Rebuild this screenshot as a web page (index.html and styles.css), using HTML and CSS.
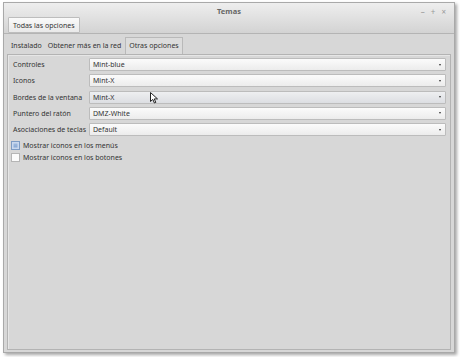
FILE: index.html
```html
<!DOCTYPE html>
<html lang="es">
<head>
    <meta charset="UTF-8">
    <title>Temas</title>
    <link rel="stylesheet" href="styles.css">
</head>
<body>
    <div class="window">
        <div class="header">
            <div class="titlebar">
                <span class="title">Temas</span>
                <div class="wm-buttons">
                    <span>&#8211;</span>
                    <span>+</span>
                    <span>&#215;</span>
                </div>
            </div>
            <div class="toolbar">
                <button class="tool-button">Todas las opciones</button>
            </div>
        </div>

        <div class="main">
            <div class="tabs">
                <div class="tab">Instalado</div>
                <div class="tab">Obtener más en la red</div>
                <div class="tab active">Otras opciones</div>
            </div>

            <div class="panel">
                <div class="form">
                    <label class="label">Controles</label>
                    <div class="combo"><span>Mint-blue</span><span class="arrow"></span></div>

                    <label class="label">Iconos</label>
                    <div class="combo"><span>Mint-X</span><span class="arrow"></span></div>

                    <label class="label">Bordes de la ventana</label>
                    <div class="combo hover"><span>Mint-X</span><span class="arrow"></span>
                        <svg class="cursor" width="9" height="12" viewBox="0 0 9 12">
                            <path d="M0.5 0.5 L0.5 9.5 L2.8 7.4 L4.4 11 L5.8 10.4 L4.3 6.9 L7.5 6.9 Z" fill="#fff" stroke="#222" stroke-width="1"/>
                        </svg>
                    </div>

                    <label class="label">Puntero del ratón</label>
                    <div class="combo"><span>DMZ-White</span><span class="arrow"></span></div>

                    <label class="label">Asociaciones de teclas</label>
                    <div class="combo"><span>Default</span><span class="arrow"></span></div>
                </div>

                <div class="checks">
                    <label class="check"><span class="box checked"></span>Mostrar iconos en los menús</label>
                    <label class="check"><span class="box"></span>Mostrar iconos en los botones</label>
                </div>
            </div>
        </div>
    </div>
</body>
</html>
```

FILE: styles.css
```css
body {
    margin: 0;
    padding: 2px 5px 4px 3px;
    background-color: #fff;
    font-family: 'Noto Sans', 'DejaVu Sans', sans-serif;
    font-size: 7px;
    color: #333;
}
.window {
    width: 450px;
    height: 349px;
    border: 1px solid #a9a9a9;
    box-shadow: 2px 2px 3px rgba(0, 0, 0, 0.35);
    display: flex;
    flex-direction: column;
    background-color: #d7d7d7;
}
.header {
    background: linear-gradient(#eeeeee, #d3d3d3);
    border-bottom: 1px solid #b4b4b4;
    height: 30px;
    display: flex;
    flex-direction: column;
}
.titlebar {
    height: 13px;
    position: relative;
    display: flex;
    align-items: center;
    justify-content: center;
}
.title {
    font-weight: bold;
    font-size: 7.5px;
    color: #666;
    margin-top: 2px;
}
.wm-buttons {
    position: absolute;
    right: 8px;
    top: 3px;
    display: flex;
    gap: 6px;
    color: #9a9a9a;
    font-size: 8px;
}
.toolbar {
    padding: 1px 0 0 4px;
}
.tool-button {
    font-family: inherit;
    font-size: 7px;
    color: #333;
    height: 16px;
    padding: 0 4px;
    border: 1px solid #bdbdbd;
    border-radius: 1px;
    background: linear-gradient(#fafafa, #e9e9e9);
}
.main {
    flex: 1;
    display: flex;
    flex-direction: column;
    padding: 3px 3px 2px 3px;
}
.tabs {
    display: flex;
    align-items: flex-end;
    height: 17px;
    padding-left: 1px;
}
.tab {
    padding: 0 3px;
    height: 15px;
    line-height: 14px;
    color: #333;
}
.tab.active {
    height: 16px;
    line-height: 15px;
    border: 1px solid #b9b9b9;
    border-bottom: none;
    background-color: #dcdcdc;
    margin-left: 1px;
}
.panel {
    flex: 1;
    border: 1px solid #b3b3b3;
    box-shadow: inset 1px 1px 0 #e6e6e6;
    padding: 3px 4px 0 2px;
}
.form {
    display: grid;
    grid-template-columns: auto 1fr;
    column-gap: 3px;
    row-gap: 3.3px;
    align-items: center;
}
.label {
    padding-left: 3px;
}
.combo {
    position: relative;
    height: 13px;
    box-sizing: border-box;
    border: 1px solid #bcbcbc;
    border-radius: 1px;
    background: linear-gradient(#fbfbfb, #ececec);
    display: flex;
    align-items: center;
    justify-content: space-between;
    padding: 0 4px 0 3px;
}
.combo.hover {
    background: linear-gradient(#eeeff1, #dcdee2);
}
.arrow {
    width: 0;
    height: 0;
    border-left: 1.5px solid transparent;
    border-right: 1.5px solid transparent;
    border-top: 2px solid #333;
}
.cursor {
    position: absolute;
    left: 60px;
    top: 0;
}
.checks {
    display: flex;
    flex-direction: column;
    gap: 3px;
    margin-top: 5px;
    padding-left: 1px;
}
.check {
    display: flex;
    align-items: center;
    gap: 3px;
}
.box {
    width: 7px;
    height: 7px;
    border: 1px solid #b5b5b5;
    background-color: #fbfbfb;
}
.box.checked {
    border-color: #7d9cc4;
    background: linear-gradient(#a9c2e2, #7fa2d1);
    box-shadow: inset 0 0 0 1.5px #c8d8ee;
}
```
